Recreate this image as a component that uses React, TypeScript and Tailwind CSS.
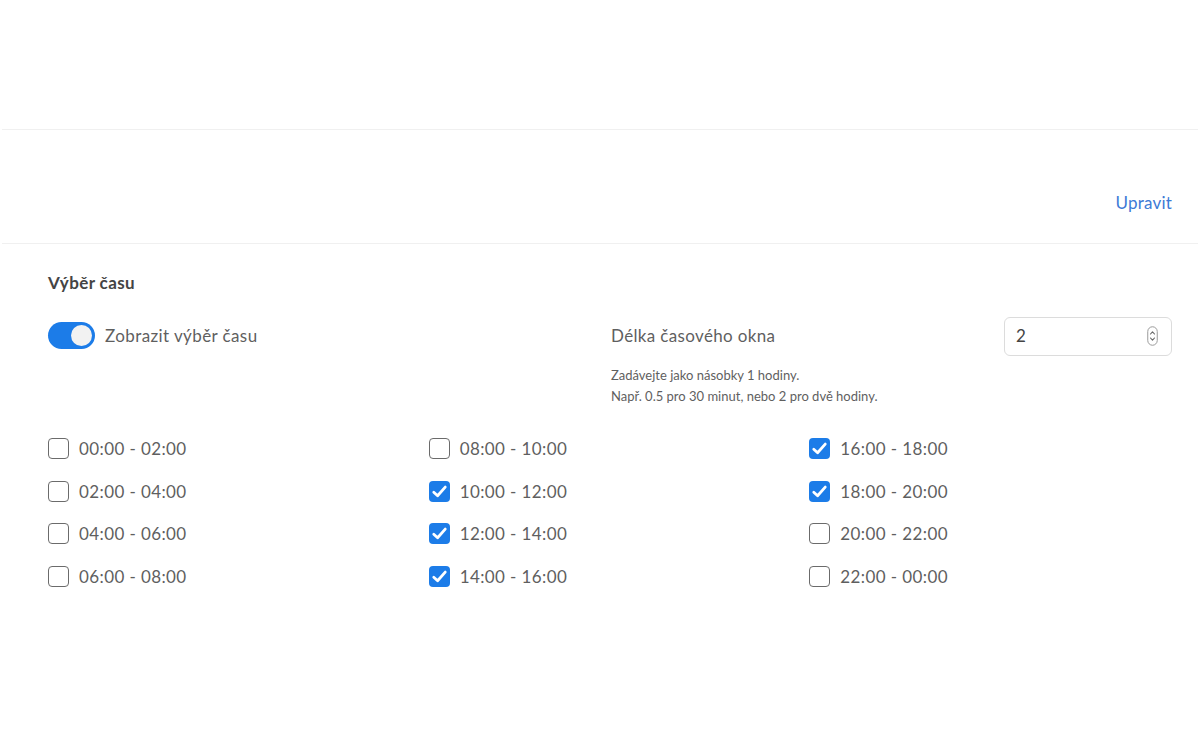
import React, { useState } from 'react';

const slots = [
  ['00:00 - 02:00', '02:00 - 04:00', '04:00 - 06:00', '06:00 - 08:00'],
  ['08:00 - 10:00', '10:00 - 12:00', '12:00 - 14:00', '14:00 - 16:00'],
  ['16:00 - 18:00', '18:00 - 20:00', '20:00 - 22:00', '22:00 - 00:00'],
];

const initialChecked = ['10:00 - 12:00', '12:00 - 14:00', '14:00 - 16:00', '16:00 - 18:00', '18:00 - 20:00'];

const Checkbox: React.FC<{ label: string; checked: boolean; onToggle: () => void }> = ({ label, checked, onToggle }) => (
  <button onClick={onToggle} className="flex items-center gap-[10px] h-[42.5px] text-left">
    {checked ? (
      <span className="w-[21px] h-[21px] rounded-[4px] bg-[#1c7ce8] flex items-center justify-center">
        <svg width="17" height="17" viewBox="0 0 16 16" fill="none">
          <path d="M2.6 8.6 L6.2 12 L13.4 3.8" stroke="white" strokeWidth="2.6" strokeLinecap="round" strokeLinejoin="round" />
        </svg>
      </span>
    ) : (
      <span className="w-[21px] h-[21px] rounded-[4px] border-[1.5px] border-[#6b6b6b] bg-white" />
    )}
    <span className="text-[17px] text-[#5f5f5f] tracking-[0.4px]">{label}</span>
  </button>
);

const App: React.FC = () => {
  const [showTime, setShowTime] = useState(true);
  const [checked, setChecked] = useState<string[]>(initialChecked);

  const toggle = (s: string) =>
    setChecked(prev => (prev.includes(s) ? prev.filter(x => x !== s) : [...prev, s]));

  return (
    <div className="w-[1200px] h-[750px] bg-white font-['Lato','Liberation_Sans',sans-serif] text-[#5f5f5f]">
      <div className="h-[129px]" />
      <div className="mx-[2px] border-t border-[#f0f0f0]" />

      {/* Header row */}
      <div className="h-[113px] flex items-end justify-end pr-[28px] pb-[28px]">
        <a className="text-[17px] text-[#3d7ad6] tracking-[0.2px] cursor-pointer">Upravit</a>
      </div>
      <div className="mx-[2px] border-t border-[#f0f0f0]" />

      <div className="pl-[48px] pr-[28px] pt-[26px]">
        <h3 className="text-[17px] font-bold text-[#444] tracking-[0.4px]">Výběr času</h3>

        <div className="grid grid-cols-[563px_1fr] mt-[21px]">
          <div className="flex items-center gap-[10px] h-[38px] self-start">
            <button
              onClick={() => setShowTime(!showTime)}
              className={`w-[47px] h-[27px] rounded-full flex items-center px-[3px] ${showTime ? 'bg-[#1c7ce8] justify-end' : 'bg-[#ccc] justify-start'}`}
            >
              <span className="w-[21px] h-[21px] rounded-full bg-[#f2f2f2]" />
            </button>
            <span className="text-[17px] tracking-[0.4px]">Zobrazit výběr času</span>
          </div>

          <div>
            <div className="flex items-center justify-between">
              <span className="text-[17px] tracking-[0.35px]">Délka časového okna</span>
              <div className="w-[168px] h-[39px] rounded-[6px] border border-[#dcdcdc] flex items-center justify-between pl-[11px] pr-[13px]">
                <span className="text-[17px] text-[#444]">2</span>
                <svg width="11" height="20" viewBox="0 0 11 20" fill="none">
                  <rect x="0.75" y="0.75" width="9.5" height="18.5" rx="4.75" stroke="#9a9a9a" strokeWidth="1" />
                  <path d="M3.5 8 L5.5 5.8 L7.5 8" stroke="#666" strokeWidth="1.1" strokeLinecap="round" strokeLinejoin="round" />
                  <path d="M3.5 12 L5.5 14.2 L7.5 12" stroke="#666" strokeWidth="1.1" strokeLinecap="round" strokeLinejoin="round" />
                </svg>
              </div>
            </div>
            <p className="mt-[9px] text-[13px] leading-[21px]">
              Zadávejte jako násobky 1 hodiny.
              <br />
              Např. 0.5 pro 30 minut, nebo 2 pro dvě hodiny.
            </p>
          </div>
        </div>

        <div className="grid grid-cols-3 gap-x-[18px] mt-[21px]">
          {slots.map((col, i) => (
            <div key={i} className="flex flex-col">
              {col.map(s => (
                <Checkbox key={s} label={s} checked={checked.includes(s)} onToggle={() => toggle(s)} />
              ))}
            </div>
          ))}
        </div>
      </div>
    </div>
  );
};

export default App;
